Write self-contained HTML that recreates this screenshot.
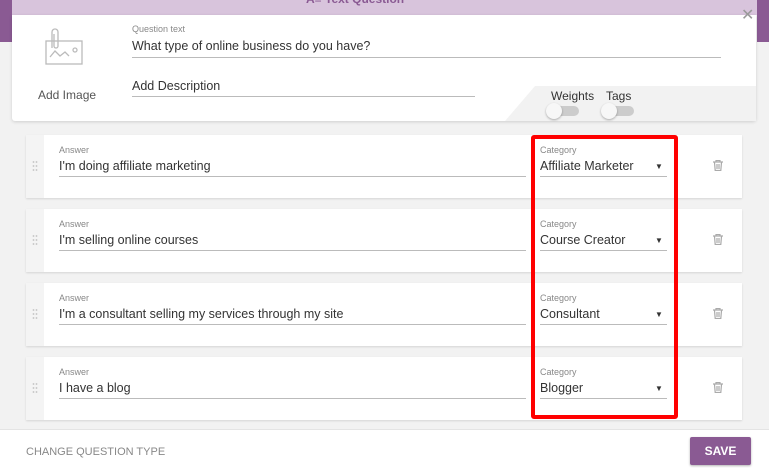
<!DOCTYPE html>
<html><head><style>
*{margin:0;padding:0;box-sizing:border-box}
body{width:769px;height:468px;background:#f2f2f2;font-family:"Liberation Sans",sans-serif;position:relative;overflow:hidden;color:#333}
.abs{position:absolute}
.lbl{font-size:9px;color:#888}
.txt{font-size:12.5px;color:#333}
.line{height:1px;background:#bbb}
.card{position:absolute;left:26px;width:716px;height:63px;background:#fff;box-shadow:0 1px 2px rgba(0,0,0,.12)}
.card .h{position:absolute;left:0;top:0;width:18px;height:63px;background:#f4f4f4}
.dots{position:absolute;left:6px;top:25px;width:6px;height:12px;background-image:radial-gradient(circle,#ccc 0.8px,transparent 1px);background-size:3px 4px}
.tr{position:absolute;left:687px;top:25px}
</style></head><body>
<div class="abs" style="left:0;top:0;width:12px;height:42px;background:#8a5a93"></div>
<div class="abs" style="left:757px;top:0;width:12px;height:42px;background:#8a5a93"></div>
<div class="abs" style="left:12px;top:0;width:745px;height:15px;background:#d8c4dc;overflow:hidden"><div class="abs" style="left:294px;top:-8px;font-size:12px;color:#8a5a93;font-weight:bold">A≡ Text Question</div></div>
<div class="abs" style="left:12px;top:15px;width:744px;height:106px;background:#fff;box-shadow:0 1px 3px rgba(0,0,0,.15);border-radius:0 0 3px 3px"></div>
<svg class="abs" style="left:505px;top:86px" width="251" height="35"><polygon points="30,0 251,0 251,35 0,35" fill="#f2f2f2"/></svg>
<div class="abs" style="left:741px;top:5px;font-size:16px;color:#999">✕</div>
<svg class="abs" style="left:44px;top:28px" width="42" height="40" fill="none" stroke="#bbb" stroke-width="1.3"><rect x="2" y="13" width="36" height="23"/><path d="M6 29 L11 23 L16 28 L21 24 L25 28"/><circle cx="31" cy="22" r="2"/><path d="M8 20 V4 a3 3 0 0 1 6 0 V18 a2 2 0 0 1 -4 0 V6"/></svg>
<div class="abs" style="left:38px;top:88px;font-size:12px;color:#555">Add Image</div>
<div class="abs lbl" style="left:132px;top:24px">Question text</div>
<div class="abs txt" style="left:132px;top:39px">What type of online business do you have?</div>
<div class="abs line" style="left:132px;top:57px;width:589px"></div>
<div class="abs txt" style="left:132px;top:79px">Add Description</div>
<div class="abs line" style="left:132px;top:96px;width:343px"></div>
<div class="abs" style="left:551px;top:89px;font-size:12px;color:#333">Weights</div>
<div class="abs" style="left:606px;top:89px;font-size:12px;color:#333">Tags</div>
<div class="abs" style="left:549px;top:106px;width:30px;height:10px;border-radius:5px;background:#ccc"></div>
<div class="abs" style="left:546px;top:103px;width:16px;height:16px;border-radius:50%;background:#f7f7f7;box-shadow:0 1px 2px rgba(0,0,0,.3)"></div>
<div class="abs" style="left:604px;top:106px;width:30px;height:10px;border-radius:5px;background:#ccc"></div>
<div class="abs" style="left:601px;top:103px;width:16px;height:16px;border-radius:50%;background:#f7f7f7;box-shadow:0 1px 2px rgba(0,0,0,.3)"></div>

<div class="card" style="top:135px"><div class="h"><div class="dots"></div></div>
<div class="abs lbl" style="left:33px;top:10px">Answer</div><div class="abs txt" style="left:33px;top:24px">I'm doing affiliate marketing</div><div class="abs line" style="left:33px;top:41px;width:467px"></div>
<div class="abs lbl" style="left:514px;top:10px">Category</div><div class="abs txt" style="left:514px;top:24px">Affiliate Marketer</div><div class="abs" style="left:629px;top:27px;font-size:8px">▼</div><div class="abs line" style="left:514px;top:41px;width:127px"></div>
<svg class="tr" width="10" height="11" fill="none" stroke="#aaa" stroke-width="1.2"><path d="M0 2h10M3 2V0.5h4V2M1.5 2.5l.7 8h5.6l.7-8M4 4v5M6 4v5"/></svg></div>

<div class="card" style="top:209px"><div class="h"><div class="dots"></div></div>
<div class="abs lbl" style="left:33px;top:10px">Answer</div><div class="abs txt" style="left:33px;top:24px">I'm selling online courses</div><div class="abs line" style="left:33px;top:41px;width:467px"></div>
<div class="abs lbl" style="left:514px;top:10px">Category</div><div class="abs txt" style="left:514px;top:24px">Course Creator</div><div class="abs" style="left:629px;top:27px;font-size:8px">▼</div><div class="abs line" style="left:514px;top:41px;width:127px"></div>
<svg class="tr" width="10" height="11" fill="none" stroke="#aaa" stroke-width="1.2"><path d="M0 2h10M3 2V0.5h4V2M1.5 2.5l.7 8h5.6l.7-8M4 4v5M6 4v5"/></svg></div>

<div class="card" style="top:283px"><div class="h"><div class="dots"></div></div>
<div class="abs lbl" style="left:33px;top:10px">Answer</div><div class="abs txt" style="left:33px;top:24px">I'm a consultant selling my services through my site</div><div class="abs line" style="left:33px;top:41px;width:467px"></div>
<div class="abs lbl" style="left:514px;top:10px">Category</div><div class="abs txt" style="left:514px;top:24px">Consultant</div><div class="abs" style="left:629px;top:27px;font-size:8px">▼</div><div class="abs line" style="left:514px;top:41px;width:127px"></div>
<svg class="tr" width="10" height="11" fill="none" stroke="#aaa" stroke-width="1.2"><path d="M0 2h10M3 2V0.5h4V2M1.5 2.5l.7 8h5.6l.7-8M4 4v5M6 4v5"/></svg></div>

<div class="card" style="top:357px"><div class="h"><div class="dots"></div></div>
<div class="abs lbl" style="left:33px;top:10px">Answer</div><div class="abs txt" style="left:33px;top:24px">I have a blog</div><div class="abs line" style="left:33px;top:41px;width:467px"></div>
<div class="abs lbl" style="left:514px;top:10px">Category</div><div class="abs txt" style="left:514px;top:24px">Blogger</div><div class="abs" style="left:629px;top:27px;font-size:8px">▼</div><div class="abs line" style="left:514px;top:41px;width:127px"></div>
<svg class="tr" width="10" height="11" fill="none" stroke="#aaa" stroke-width="1.2"><path d="M0 2h10M3 2V0.5h4V2M1.5 2.5l.7 8h5.6l.7-8M4 4v5M6 4v5"/></svg></div>

<div class="abs" style="left:531px;top:135px;width:147px;height:284px;border:4px solid #f00;border-radius:3px"></div>

<div class="abs" style="left:0;top:429px;width:769px;height:39px;background:#fff;border-top:1px solid #e4e4e4"></div>
<div class="abs" style="left:26px;top:446px;font-size:11px;color:#888">CHANGE QUESTION TYPE</div>
<div class="abs" style="left:690px;top:437px;width:61px;height:28px;background:#8a5a93;color:#fff;font-size:12px;font-weight:bold;text-align:center;line-height:28px;border-radius:2px;box-shadow:0 1px 2px rgba(0,0,0,.3)">SAVE</div>
</body></html>
